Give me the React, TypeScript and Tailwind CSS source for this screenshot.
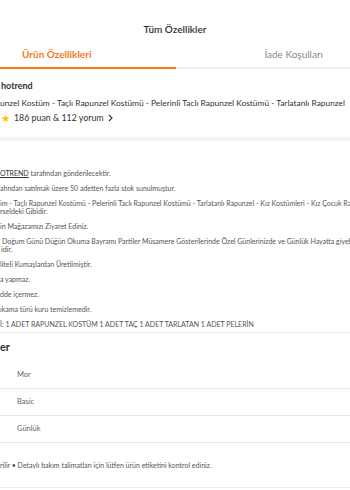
import React from "react";

const Item = ({ lines, last = false }: { lines: React.ReactNode[]; last?: boolean }) => (
  <div className={last ? "mb-0" : "mb-[7px]"}>
    {lines.map((l, i) => (
      <div key={i} className="whitespace-nowrap leading-[8px] h-[8px]">
        {l}
      </div>
    ))}
  </div>
);

export default function App() {
  return (
    <div
      className="w-[350px] h-[490px] overflow-hidden bg-white text-[#333]"
      style={{ fontFamily: "Lato, 'Noto Sans', sans-serif" }}
    >
      {/* Header */}
      <div className="h-[42px] pt-[23px] text-center text-[10px] leading-[12px] font-semibold text-[#333]">
        Tüm Özellikler
      </div>

      {/* Tabs */}
      <div className="flex h-[27px]">
        <div className="w-[176px] flex flex-col">
          <div className="flex-1 flex items-center pl-[22px] text-[10px] font-bold text-[#f27a1a]">
            Ürün Özellikleri
          </div>
          <div className="h-[2px] bg-[#f27a1a]" />
        </div>
        <div className="flex-1 flex flex-col">
          <div className="flex-1 flex items-center justify-end pr-[27px] text-[10px] text-[#8a8a8a]">
            İade Koşulları
          </div>
          <div className="h-[2px] bg-[#ededed]" />
        </div>
      </div>

      {/* Product block */}
      <div className="h-[68px] pt-[11px]">
        <div className="pl-[1px] text-[9px] leading-[12px] h-[17px] font-bold text-[#333] whitespace-nowrap">
          hotrend
        </div>
        <div className="text-[8.4px] leading-[12px] h-[15px] text-[#333] whitespace-nowrap">
          unzel Kostüm - Taçlı Rapunzel Kostümü - Pelerinli Taclı Rapunzel Kostümü - Tarlatanlı Rapunzel
        </div>
        <div className="flex items-center h-[12px] text-[8.8px] text-[#333] whitespace-nowrap">
          <svg width="9" height="9" viewBox="0 0 24 24" className="ml-[1px] mr-[4px]">
            <path
              d="M12 2l2.9 6.6 7.1.6-5.4 4.7 1.6 7-6.2-3.7-6.2 3.7 1.6-7L2 9.2l7.1-.6z"
              fill="#ffc000"
            />
          </svg>
          <span>186 puan &amp; 112 yorum</span>
          <svg width="7" height="8" viewBox="0 0 7 8" className="ml-[3px]">
            <path d="M2 1l3 3-3 3" fill="none" stroke="#333" strokeWidth="1.1" />
          </svg>
        </div>
      </div>
      <div className="h-[4px] bg-[#f4f4f4]" />

      {/* Description list */}
      <div className="pt-[28px] pb-[4px] text-[7px] text-[#555] border-b border-[#ececec]">
        <Item
          lines={[
            <span>
              <span className="underline text-[#333]">OTREND</span> tarafından gönderilecektir.
            </span>,
          ]}
        />
        <Item lines={["ahndan satılmak üzere 50 adetten fazla stok sunulmuştur."]} />
        <Item
          lines={[
            "im - Taçlı Rapunzel Kostümü - Pelerinli Taclı Rapunzel Kostümü - Tarlatanlı Rapunzel - Kız Kostümleri - Kız Çocuk Rapunzel Kostümü",
            "rseldeki Gibidir.",
          ]}
        />
        <Item lines={["in Mağazamızı Ziyaret Ediniz."]} />
        <Item
          lines={[
            <span className="pl-[2px]">
              Doğum Günü Düğün Okuma Bayramı Partiler Müsamere Gösterilerinde Özel Günlerinizde ve Günlük Hayatta giyebilirsiniz
            </span>,
            <span className="pl-[1px]">idir.</span>,
          ]}
        />
        <Item lines={["liteli Kumaşlardan Üretilmiştir."]} />
        <Item lines={["a yapmaz."]} />
        <Item lines={["dde içermez."]} />
        <Item lines={["ıkama türü kuru temizlemedir."]} />
        <Item lines={["İ: 1 ADET RAPUNZEL KOSTÜM 1 ADET TAÇ 1 ADET TARLATAN 1 ADET PELERİN"]} last />
      </div>

      {/* Attributes heading */}
      <div className="h-[29px] flex items-center text-[11px] font-bold text-[#333]">er</div>

      {/* Table */}
      <div className="text-[7.5px] text-[#666]">
        {["Mor", "Basic", "Günlük"].map((v) => (
          <div key={v} className="h-[27px] flex items-center pl-[17px] border-b border-[#e6e6e6]">
            {v}
          </div>
        ))}
      </div>

      {/* Care */}
      <div className="h-[45px] flex items-center pt-[1px] text-[7px] text-[#555] whitespace-nowrap border-b border-[#ececec]">
        rilir • Detaylı bakım talimatları için lütfen ürün etiketini kontrol ediniz.
      </div>
    </div>
  );
}
